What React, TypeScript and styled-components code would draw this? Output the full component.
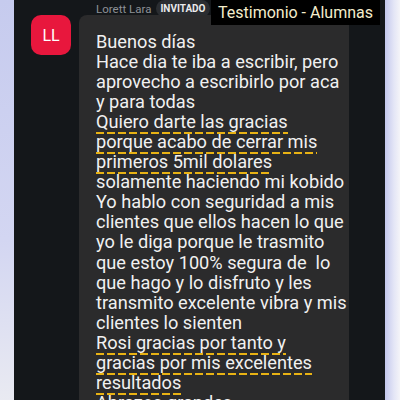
import React from 'react';
import styled, { createGlobalStyle } from 'styled-components';

const GlobalStyle = createGlobalStyle`
  html, body {
    margin: 0;
    padding: 0;
    background: #c9cdef;
  }
  body {
    font-family: Roboto, "Noto Sans", sans-serif;
  }
`;

const Frame = styled.div`
  display: flex;
  width: 400px;
  height: 400px;
  overflow: hidden;
`;

const LeftEdge = styled.div`
  width: 14px;
  background: linear-gradient(180deg, #c6cbee 0%, #d3d6f2 60%, #e9eaf2 100%);
`;

const RightEdge = styled.div`
  width: 15px;
  background: linear-gradient(90deg, #c3c7ec 0%, #e4e6f6 60%, #f4f4f8 100%);
`;

const Screen = styled.div`
  position: relative;
  flex: 1;
  background: #14171a;
  display: flex;
  flex-direction: column;
`;

const Header = styled.div`
  height: 25px;
  display: flex;
  align-items: center;
  gap: 5px;
  padding-left: 82px;
`;

const Author = styled.span`
  color: #8d9196;
  font-size: 11.5px;
`;

const Badge = styled.span`
  background: #2a2d31;
  color: #e9eaec;
  font-size: 10px;
  font-weight: 700;
  line-height: 12px;
  padding: 3px 4px 2px;
  border-radius: 9px;
`;

const Caption = styled.div`
  position: absolute;
  top: 0;
  left: 197px;
  width: 169px;
  height: 25px;
  background: #000;
  color: #f4edcc;
  font-size: 16px;
  display: flex;
  align-items: center;
  justify-content: center;
`;

const MessageRow = styled.div`
  display: flex;
  gap: 8px;
  padding-left: 17px;
  flex: 1;
  margin-top: -2px;
`;

const Avatar = styled.div`
  width: 40px;
  height: 40px;
  flex: none;
  border-radius: 10px;
  background: #e8173d;
  color: #fff;
  font-size: 16px;
  display: flex;
  align-items: center;
  justify-content: center;
`;

const Bubble = styled.div`
  width: 270px;
  background: #2b2b2c;
  border-radius: 8px 8px 0 0;
  padding: 17px 0 0 17px;
  box-sizing: border-box;
  color: #f1f1f1;
  font-size: 18.2px;
  line-height: 20.05px;
`;

const Line = styled.div`
  white-space: pre;
`;

const Marked = styled.span`
  padding-bottom: 2px;
  background-image: repeating-linear-gradient(90deg, #e8b214 0 8px, transparent 8px 11px);
  background-size: 100% 2px;
  background-repeat: no-repeat;
  background-position: 0 100%;
`;

const lines: { text: string; marked?: boolean }[] = [
  { text: 'Buenos días' },
  { text: 'Hace dia te iba a escribir, pero' },
  { text: 'aprovecho a escribirlo por aca' },
  { text: 'y para todas' },
  { text: 'Quiero darte las gracias', marked: true },
  { text: 'porque acabo de cerrar mis', marked: true },
  { text: 'primeros 5mil dolares', marked: true },
  { text: 'solamente haciendo mi kobido' },
  { text: 'Yo hablo con seguridad a mis' },
  { text: 'clientes que ellos hacen lo que' },
  { text: 'yo le diga porque le trasmito' },
  { text: 'que estoy 100% segura de  lo' },
  { text: 'que hago y lo disfruto y les' },
  { text: 'transmito excelente vibra y mis' },
  { text: 'clientes lo sienten' },
  { text: 'Rosi gracias por tanto y', marked: true },
  { text: 'gracias por mis excelentes', marked: true },
  { text: 'resultados', marked: true },
  { text: 'Abrazos grandes' },
];

export default function App() {
  return (
    <Frame>
      <GlobalStyle />
      <LeftEdge />
      <Screen>
        <Header>
          <Author>Lorett Lara</Author>
          <Badge>INVITADO</Badge>
        </Header>
        <Caption>Testimonio - Alumnas</Caption>
        <MessageRow>
          <Avatar>LL</Avatar>
          <Bubble>
            {lines.map((l, i) => (
              <Line key={i}>{l.marked ? <Marked>{l.text}</Marked> : l.text}</Line>
            ))}
          </Bubble>
        </MessageRow>
      </Screen>
      <RightEdge />
    </Frame>
  );
}
